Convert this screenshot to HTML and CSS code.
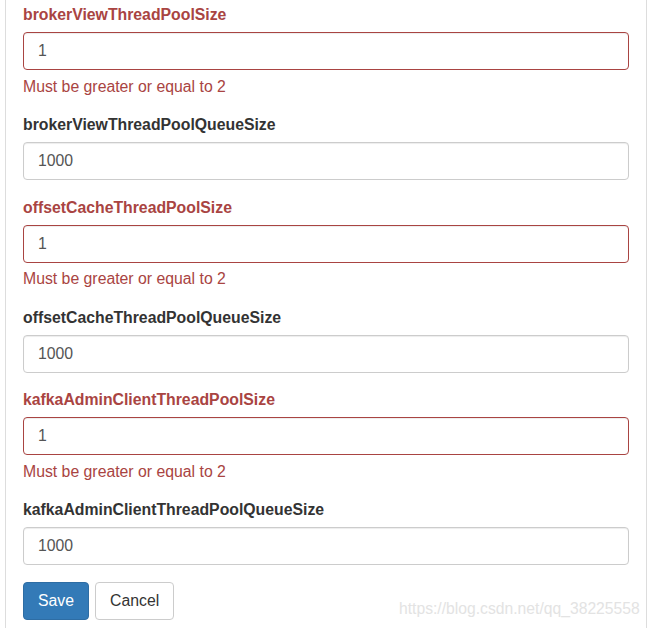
FILE: index.html
```html
<!DOCTYPE html>
<html>
<head>
<meta charset="utf-8">
<link rel="stylesheet" href="styles.css">
</head>
<body>
<div class="panel">
  <form class="form">
    <div class="form-group has-error">
      <label class="control-label">brokerViewThreadPoolSize</label>
      <input class="form-control" type="text" value="1">
      <span class="help-block">Must be greater or equal to 2</span>
    </div>
    <div class="form-group">
      <label class="control-label">brokerViewThreadPoolQueueSize</label>
      <input class="form-control" type="text" value="1000">
    </div>
    <div class="form-group has-error">
      <label class="control-label">offsetCacheThreadPoolSize</label>
      <input class="form-control" type="text" value="1">
      <span class="help-block">Must be greater or equal to 2</span>
    </div>
    <div class="form-group">
      <label class="control-label">offsetCacheThreadPoolQueueSize</label>
      <input class="form-control" type="text" value="1000">
    </div>
    <div class="form-group has-error">
      <label class="control-label">kafkaAdminClientThreadPoolSize</label>
      <input class="form-control" type="text" value="1">
      <span class="help-block">Must be greater or equal to 2</span>
    </div>
    <div class="form-group">
      <label class="control-label">kafkaAdminClientThreadPoolQueueSize</label>
      <input class="form-control" type="text" value="1000">
    </div>
    <div class="actions">
      <button type="button" class="btn btn-primary">Save</button>
      <button type="button" class="btn btn-default">Cancel</button>
    </div>
  </form>
</div>
<div class="watermark">https://blog.csdn.net/qq_38225558</div>
</body>
</html>
```
FILE: styles.css
```css
html, body {
  margin: 0;
  padding: 0;
  background: #fff;
}
body {
  font-family: "Liberation Sans", Arial, sans-serif;
  font-size: 15.8px;
  line-height: 22px;
  color: #333;
  height: 628px;
  overflow: hidden;
  position: relative;
}
.panel {
  margin-left: 5px;
  width: 642px;
  height: 628px;
  box-sizing: border-box;
  border-left: 1px solid #dddddd;
  border-right: 1px solid #dddddd;
  padding: 4px 17px 0 17px;
}
.form {
  display: flex;
  flex-direction: column;
}
.form-group {
  display: flex;
  flex-direction: column;
  margin-bottom: 16.5px;
}
.control-label {
  font-weight: bold;
  line-height: 22px;
  margin-bottom: 6px;
  color: #333;
}
.form-control {
  box-sizing: border-box;
  height: 38px;
  width: 100%;
  margin: 0;
  padding: 0 14px;
  font-family: "Liberation Sans", Arial, sans-serif;
  font-size: 15.8px;
  color: #555;
  background: #fff;
  border: 1px solid #cccccc;
  border-radius: 4px;
  box-shadow: inset 0 1px 1px rgba(0,0,0,0.075);
  outline: none;
}
.has-error .control-label,
.has-error .help-block {
  color: #a94442;
}
.has-error .form-control {
  border-color: #a94442;
}
.help-block {
  display: block;
  margin-top: 5.5px;
  line-height: 22px;
}
.actions {
  display: flex;
  gap: 6px;
  padding-top: 0.5px;
}
.btn {
  box-sizing: border-box;
  height: 38px;
  padding: 0 14px;
  font-family: "Liberation Sans", Arial, sans-serif;
  font-size: 15.8px;
  border-radius: 4px;
  border: 1px solid transparent;
  cursor: pointer;
}
.btn-primary {
  background: #337ab7;
  border-color: #2e6da4;
  color: #fff;
}
.btn-default {
  background: #fff;
  border-color: #cccccc;
  color: #333;
}
.watermark {
  position: absolute;
  left: 399px;
  top: 598px;
  font-size: 15.7px;
  line-height: 22px;
  color: #e3e3e3;
  white-space: nowrap;
}
```
